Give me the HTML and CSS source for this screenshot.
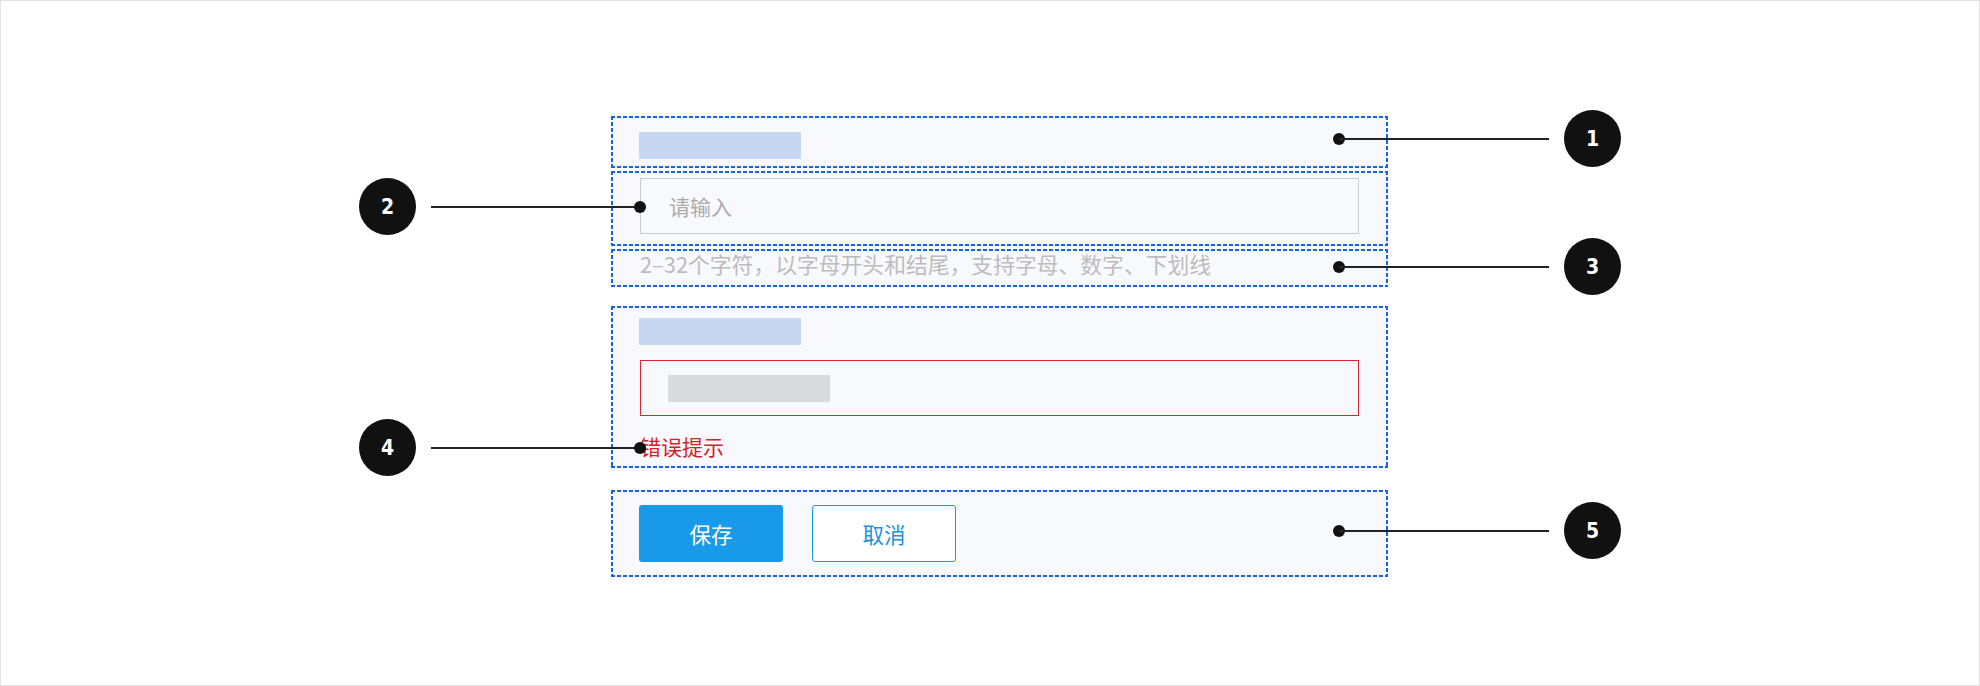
FILE: index.html
```html
<!DOCTYPE html>
<html lang="zh-CN">
<head>
<meta charset="utf-8">
<title>表单规范</title>
<link rel="stylesheet" href="styles.css">
</head>
<body>
<div class="frame">
  <div class="form">
    <div class="zone zone-label">
      <div class="label-bar"></div>
    </div>
    <div class="zone zone-input">
      <div class="input"><span class="placeholder">请输入</span></div>
    </div>
    <div class="zone zone-help">
      <span class="help">2–32个字符，以字母开头和结尾，支持字母、数字、下划线</span>
    </div>
    <div class="zone zone-error">
      <div class="label-bar"></div>
      <div class="input input-error"><div class="value-bar"></div></div>
      <div class="error-text">错误提示</div>
    </div>
    <div class="zone zone-actions">
      <button class="btn btn-primary">保存</button>
      <button class="btn btn-ghost">取消</button>
    </div>
  </div>

  <div class="anno anno-right a1"><span class="dot"></span><span class="line"></span><span class="badge">1</span></div>
  <div class="anno anno-left a2"><span class="badge">2</span><span class="line"></span><span class="dot"></span></div>
  <div class="anno anno-right a3"><span class="dot"></span><span class="line"></span><span class="badge">3</span></div>
  <div class="anno anno-left a4"><span class="badge">4</span><span class="line"></span><span class="dot"></span></div>
  <div class="anno anno-right a5"><span class="dot"></span><span class="line"></span><span class="badge">5</span></div>
</div>
</body>
</html>
```
FILE: styles.css
```css
* { box-sizing: border-box; }
html, body { margin: 0; padding: 0; background: #fff; }
body { font-family: "Noto Sans CJK SC", "Noto Sans", sans-serif; }

.frame {
  position: relative;
  width: 1980px;
  height: 686px;
  border: 1px solid #e2e2e2;
  padding: 115px 0 0 610px;
}

.form {
  width: 777px;
  display: flex;
  flex-direction: column;
}

.zone {
  --d: #1763e6;
  background:
    repeating-linear-gradient(90deg, var(--d) 0 4px, transparent 4px 6px) left top / 100% 2px no-repeat,
    repeating-linear-gradient(90deg, var(--d) 0 4px, transparent 4px 6px) left bottom / 100% 2px no-repeat,
    repeating-linear-gradient(180deg, var(--d) 0 4px, transparent 4px 6px) left top / 2px 100% no-repeat,
    repeating-linear-gradient(180deg, var(--d) 0 4px, transparent 4px 6px) right top / 2px 100% no-repeat,
    #f8f9fd;
  padding-left: 29px;
  padding-right: 29px;
}

.label-bar {
  width: 162px;
  height: 27px;
  background: #c7d6f1;
}

.zone-label { height: 52px; padding-top: 16px; }
.zone-label .label-bar { margin-left: -1px; }

.zone-input { height: 75px; padding-top: 7px; margin-top: 3px; }

.input {
  height: 56px;
  border: 1.5px solid #c9cacc;
  display: flex;
  align-items: center;
  padding-left: 28px;
}
.placeholder {
  font-size: 21px;
  color: #ababab;
  line-height: 1;
}

.zone-help { height: 38px; margin-top: 3px; }
.help {
  display: block;
  font-size: 21.8px;
  line-height: 30px;
  color: #bcbcbc;
  white-space: nowrap;
}

.zone-error { height: 162px; margin-top: 19px; padding-top: 12px; }
.zone-error .label-bar { margin-left: -1px; }
.input-error {
  margin-top: 15px;
  border-color: #d7262d;
  padding-left: 27px;
}
.value-bar {
  width: 162px;
  height: 27px;
  background: #d9dadd;
}
.error-text {
  margin-top: 15px;
  font-size: 21px;
  line-height: 30px;
  color: #d42029;
}

.zone-actions {
  height: 87px;
  margin-top: 22px;
  padding-top: 15px;
  padding-left: 28px;
  display: flex;
  align-items: flex-start;
  gap: 29px;
}
.btn {
  width: 144px;
  height: 57px;
  border-radius: 3px;
  font-family: "Noto Sans CJK SC", "Noto Sans", sans-serif;
  font-size: 21.5px;
  padding: 0;
  cursor: pointer;
}
.btn-primary {
  background: #1899e9;
  border: none;
  color: #fff;
}
.btn-ghost {
  background: #fff;
  border: 1.5px solid #1d98e6;
  color: #1b93e0;
}

/* annotations */
.anno {
  position: absolute;
  display: flex;
  align-items: center;
  height: 57px;
}
.dot {
  width: 12px;
  height: 12px;
  border-radius: 50%;
  background: #111;
  flex: none;
}
.line {
  height: 2px;
  background: #222;
  flex: none;
}
.badge {
  width: 57px;
  height: 57px;
  border-radius: 50%;
  background: #111;
  color: #fff;
  display: flex;
  align-items: center;
  justify-content: center;
  font-family: "DejaVu Sans Condensed", "DejaVu Sans", sans-serif;
  font-weight: bold;
  font-size: 21px;
  flex: none;
}

.anno-right { left: 1332px; }
.anno-right .line { width: 210px; margin-left: -6px; margin-right: 15px; }
.a1 { top: 109px; }
.a3 { top: 237px; }
.a5 { top: 501px; }

.anno-left { left: 358px; }
.anno-left .line { width: 209px; margin-left: 15px; margin-right: -6px; }
.a2 { top: 177px; }
.a4 { top: 418px; }
```
